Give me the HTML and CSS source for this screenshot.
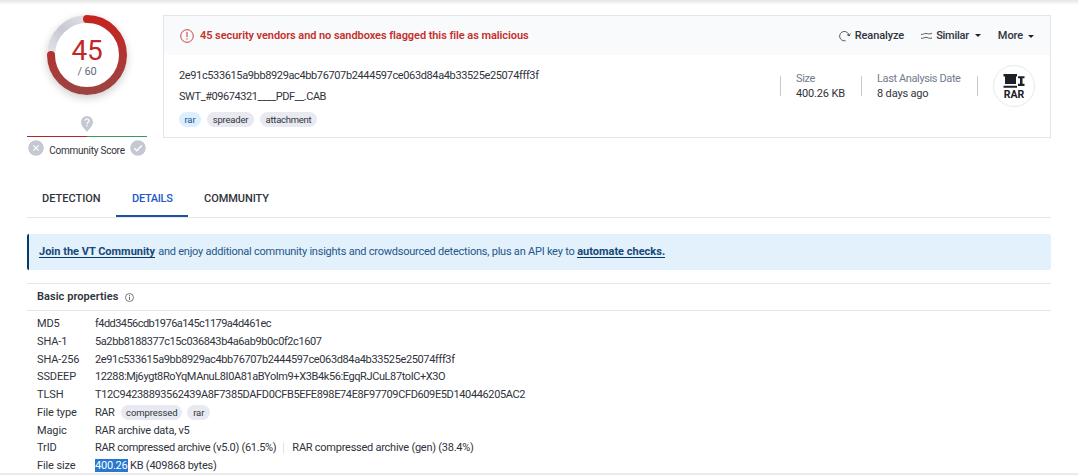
FILE: index.html
```html
<!DOCTYPE html>
<html lang="en">
<head>
<meta charset="utf-8">
<title>File details</title>
<link rel="stylesheet" href="styles.css">
</head>
<body>
<main class="page">
  <section class="summary">
    <aside class="score">
      <div class="dial">
        <svg class="ring" width="80" height="80" viewBox="0 0 80 80">
          <defs>
            <linearGradient id="danger" x1="0" y1="0" x2="0" y2="1"><stop offset="0" stop-color="#c42520"/><stop offset="1" stop-color="#9c4443"/></linearGradient>
            <linearGradient id="rest" x1="0" y1="1" x2="1" y2="0"><stop offset="0" stop-color="#e4e5eb"/><stop offset=".5" stop-color="#c6c8d2"/><stop offset="1" stop-color="#e0e1e8"/></linearGradient>
          </defs>
          <circle cx="40" cy="40" r="40" fill="#fff"/>
          <path d="M4 40A36 36 0 0 1 40 4" fill="none" stroke="url(#rest)" stroke-width="8"/>
          <path d="M40 4A36 36 0 1 1 4 40" fill="none" stroke="url(#danger)" stroke-width="8" stroke-linecap="round"/>
        </svg>
        <div class="dial-text"><span class="hits">45</span><span class="total">/ 60</span></div>
      </div>
      <svg class="pin" width="12" height="16" viewBox="0 0 12 16"><path d="M6 0a6 6 0 0 0-6 6c0 4 4 7 6 10 2-3 6-6 6-10a6 6 0 0 0-6-6z" fill="#c3c9d3"/><path d="M4 4.8C4.1 2.3 8 2.300 8 4.700 8 6.300 6.100 6.200 6.100 8M6.100 9v1.200" fill="none" stroke="#fff" stroke-width="1.200"/></svg>
      <div class="meter"></div>
      <div class="votes">
        <svg width="16" height="16" viewBox="0 0 16 16"><circle cx="8" cy="8" r="7.800" fill="#c3c8d2"/><path d="M5.300 5.300l5.400 5.400M10.700 5.300l-5.400 5.400" stroke="#fff" stroke-width="1.200"/></svg>
        <span class="votes-label">Community Score</span>
        <svg width="16" height="16" viewBox="0 0 16 16"><circle cx="8" cy="8" r="7.800" fill="#c3c8d2"/><path d="M4.300 8.200l2.500 2.500 5-5.300" fill="none" stroke="#fff" stroke-width="1.400"/></svg>
      </div>
    </aside>
    <article class="card">
      <header class="card-head">
        <svg class="alert" width="14" height="14" viewBox="0 0 14 14"><circle cx="7" cy="7" r="6.300" fill="none" stroke="#c5302c" stroke-width=".9"/><path d="M7 3v5M7 9.300v1.300" stroke="#c5302c" stroke-width="1"/></svg>
        <span class="verdict">45 security vendors and no sandboxes flagged this file as malicious</span>
        <nav class="actions">
          <span class="action reanalyze"><svg width="12" height="12" viewBox="0 0 12 12"><path d="M6.500 10.700A4.700 4.700 0 1 1 10 5.500M7.900 4.500l2.300 1.500 1.100-2.500" fill="none" stroke="#30343b" stroke-width=".8"/></svg><span class="t-reanalyze">Reanalyze</span></span>
          <span class="action similar"><svg width="11" height="8" viewBox="0 0 11 8"><path d="M0 2.500C2.500 2.500 3 1.500 5 1.500S8 2.700 11 1.200M0 6.300C2.500 6.500 3.500 5.300 5 5.300S8 7 11 6" fill="none" stroke="#30343b" stroke-width=".8"/></svg><span class="t-similar">Similar</span><i class="caret"></i></span>
          <span class="action"><span class="t-more">More</span><i class="caret caret-more"></i></span>
        </nav>
      </header>
      <div class="card-body">
        <div class="identity">
          <div class="hash">2e91c533615a9bb8929ac4bb76707b2444597ce063d84a4b33525e25074fff3f</div>
          <div class="filename">SWT_#09674321____PDF__.CAB</div>
          <div class="tags"><span class="tag tag-type">rar</span><span class="tag tag-spreader">spreader</span><span class="tag tag-attachment">attachment</span></div>
        </div>
        <div class="facts">
          <div class="fact fact-size"><span class="fact-label">Size</span><span>400.26 KB</span></div>
          <div class="fact fact-date"><span class="fact-label">Last Analysis Date</span><span>8 days ago</span></div>
          <div class="fact fact-icon">
            <div class="filetype"><svg width="22" height="15" viewBox="0 0 22 15"><path d="M.5 0h13.500v2.500h-1v7.500H2V2.500H.5zM.5 11.800h13.500v2H.5zM15 2.300h6.500v2h-2v5.500h2V12H15V9.800h2v-5.500h-2z" fill="#1d2026"/></svg><b>RAR</b></div>
          </div>
        </div>
      </div>
    </article>
  </section>
  <nav class="tabs"><span class="tab tab-detection"><span>DETECTION</span></span><span class="tab tab-details"><span>DETAILS</span></span><span class="tab tab-community"><span>COMMUNITY</span></span></nav>
  <p class="banner"><a class="join">Join the VT Community</a><span class="pitch">and enjoy additional community insights and crowdsourced detections, plus an API key to</span><a class="automate">automate checks.</a></p>
  <section class="basics">
    <h2 class="basics-head"><span>Basic properties</span><svg width="9" height="9" viewBox="0 0 9 9"><circle cx="4.500" cy="4.500" r="4" fill="none" stroke="#444" stroke-width=".7"/><path d="M4.500 2v1M4.500 3.700v3.200" stroke="#444" stroke-width=".8"/></svg></h2>
    <dl class="props">
      <dt>MD5</dt><dd><span class="v-md5">f4dd3456cdb1976a145c1179a4d461ec</span></dd>
      <dt>SHA-1</dt><dd><span class="v-sha1">5a2bb8188377c15c036843b4a6ab9b0c0f2c1607</span></dd>
      <dt>SHA-256</dt><dd><span class="v-sha256">2e91c533615a9bb8929ac4bb76707b2444597ce063d84a4b33525e25074fff3f</span></dd>
      <dt>SSDEEP</dt><dd><span class="v-ssdeep">12288:Mj6ygt8RoYqMAnuL8I0A81aBYoIm9+X3B4k56:EgqRJCuL87toIC+X3O</span></dd>
      <dt>TLSH</dt><dd><span class="v-tlsh">T12C94238893562439A8F7385DAFD0CFB5EFE898E74E8F97709CFD609E5D140446205AC2</span></dd>
      <dt>File type</dt><dd><span class="v-type">RAR</span><span class="tag tag-compressed">compressed</span><span class="tag tag-rar">rar</span></dd>
      <dt>Magic</dt><dd><span class="v-magic">RAR archive data, v5</span></dd>
      <dt>TrID</dt><dd><span class="v-trid">RAR compressed archive (v5.0) (61.5%)</span><span class="trid-next">RAR compressed archive (gen) (38.4%)</span></dd>
      <dt>File size</dt><dd><span class="v-size"><mark>400.26</mark> KB (409868 bytes)</span></dd>
    </dl>
  </section>
</main>
</body>
</html>
```
FILE: styles.css
```css
* { box-sizing: border-box; }
body { margin: 0; background: #fff; color: #30333b; font: 11px/16px Roboto, "Open Sans", sans-serif; white-space: nowrap; }
svg { display: block; flex: none; }
.page { height: 475px; overflow: hidden; padding: 15px 27px 0; background: linear-gradient(#e6e6e6, #fff 5px); border-bottom: 2px solid #ebebeb; }
.summary { display: flex; gap: 16px; height: 166px; }
.score { width: 120px; display: flex; flex-direction: column; align-items: center; }
.dial { display: grid; width: 80px; height: 80px; border-radius: 50%; box-shadow: 0 3px 8px #0003; }
.ring, .dial-text { grid-area: 1 / 1; }
.dial-text { display: flex; flex-direction: column; align-items: center; padding-top: 21px; }
.hits { color: #c0282a; font-size: 28px; line-height: 29px; letter-spacing: -.3px; }
.total { color: #5f687a; font-size: 11px; line-height: 14px; letter-spacing: -.2px; }
.pin { flex: none; margin-top: 21px; }
.meter { display: flex; flex: none; width: 120px; height: 1px; margin: 4px 0 3px; }
.meter::before, .meter::after { content: ""; flex: 1; background: #b5232b; }
.meter::after { background: #3c985a; }
.votes { display: flex; justify-content: space-between; width: 118px; }
.votes-label { font-size: 10px; line-height: 21px; letter-spacing: -.25px; }
.card { width: 888px; height: 123px; border: 1px solid #e2e6ea; }
.card-head { display: flex; align-items: center; height: 39px; padding: 0 16px; background: #f8fafc; }
.alert { margin-top: 1px; }
.verdict { margin-left: 6px; color: #c5302c; font-weight: 600; letter-spacing: -.07px; }
.actions { display: flex; margin-left: auto; font-weight: 500; letter-spacing: -.1px; }
.action { display: flex; align-items: center; gap: 4px; }
.reanalyze { margin-right: 17px; }
.similar { margin-right: 17px; }
.t-similar { letter-spacing: -.25px; }
.caret { border: 3px solid transparent; border-top-color: #222; border-bottom: 0; margin-left: 2px; }
.caret-more { margin: 1px 0 0 1px; }
.card-body { display: flex; justify-content: space-between; padding: 12px 15px 0; }
.hash, .filename { height: 21px; line-height: 18px; letter-spacing: -.37px; }
.filename { letter-spacing: -.43px; }
.tags { display: flex; gap: 6px; padding-top: 3px; }
.tag { display: inline-flex; align-items: center; justify-content: center; height: 15px; border-radius: 8px; background: #e9eaf1; font-size: 9.500px; line-height: 14px; letter-spacing: -.1px; }
.tag-type { width: 22px; background: #dcefff; color: #1b5287; }
.tag-spreader { width: 47px; letter-spacing: -.2px; }
.tag-attachment { width: 57px; letter-spacing: -.25px; }
.facts { display: flex; padding-top: 3px; }
.fact { display: flex; flex-direction: column; height: 42px; position: relative; padding: 1px 0 0 16px; letter-spacing: -.16px; }
.fact span { line-height: 15px; }
.fact::before { content: ""; position: absolute; left: 0; top: 6px; width: 1px; height: 20px; background: #c5cad2; }
.fact-label { color: #727b8c; letter-spacing: -.38px; }
.fact-size { width: 81px; }
.fact-date { width: 116px; }
.filetype { display: flex; flex-direction: column; align-items: center; width: 42px; height: 42px; margin-top: -6px; padding-top: 8px; border: 1px solid #e7e9ed; border-radius: 50%; }
.filetype b { font-size: 10.500px; line-height: 11px; letter-spacing: 0; color: #1d2026; }
.tabs { display: flex; height: 37px; border-bottom: 1px solid #e6e7e9; font-size: 11px; font-weight: 500; line-height: 35px; }
.tab-detection { width: 89px; padding-left: 15px; }
.tab-details { width: 72px; padding-left: 16px; color: #2458cb; border-bottom: 2px solid #204fa3; letter-spacing: -.3px; }
.tab-community { padding-left: 16px; letter-spacing: -.05px; }
.banner { display: flex; height: 36px; margin: 16px 0 13px; padding-left: 10px; border-left: 2px solid #073b66; border-radius: 2px; background: #e3f1fd; color: #245788; line-height: 35px; }
.banner a { align-self: flex-start; height: 15px; margin-top: 9px; line-height: 17px; font-weight: 700; color: #164878; border-bottom: 1px solid #0c3a68; }
.pitch { width: 422px; padding-left: 3px; letter-spacing: -.23px; }
.basics { border-top: 1px solid #e6e7e9; }
.basics-head { display: flex; align-items: center; gap: 7px; height: 27px; margin: 0; padding-left: 10px; border-bottom: 1px solid #e6e7e9; font-size: 11px; font-weight: 600; letter-spacing: .05px; }
.basics-head svg { margin-top: 1px; }
.props { display: grid; grid-template-columns: 58px 1fr; grid-auto-rows: 17.750px; margin: 4px 0 0; padding-left: 10px; line-height: 17.750px; }
.props dt { letter-spacing: -.12px; }
.props dd { display: flex; align-items: center; margin: 0; }
.v-md5 { letter-spacing: -.55px; }
.v-sha1 { letter-spacing: -.4px; }
.v-sha256 { letter-spacing: -.37px; }
.v-ssdeep { letter-spacing: -.4px; }
.v-tlsh { letter-spacing: -.37px; }
.v-type { letter-spacing: -.5px; }
.v-magic { letter-spacing: -.25px; }
.v-trid { letter-spacing: -.31px; }
.v-size { letter-spacing: -.22px; }
.tag-compressed { width: 61px; margin-left: 7px; }
.tag-rar { width: 23px; margin-left: 5px; }
.trid-next { margin-left: 7px; padding-left: 8px; line-height: 12px; border-left: 1px solid #e1e3e6; letter-spacing: -.25px; }
mark { display: inline-block; height: 13px; line-height: 13px; background: #2878d0; color: #fff; }
```
